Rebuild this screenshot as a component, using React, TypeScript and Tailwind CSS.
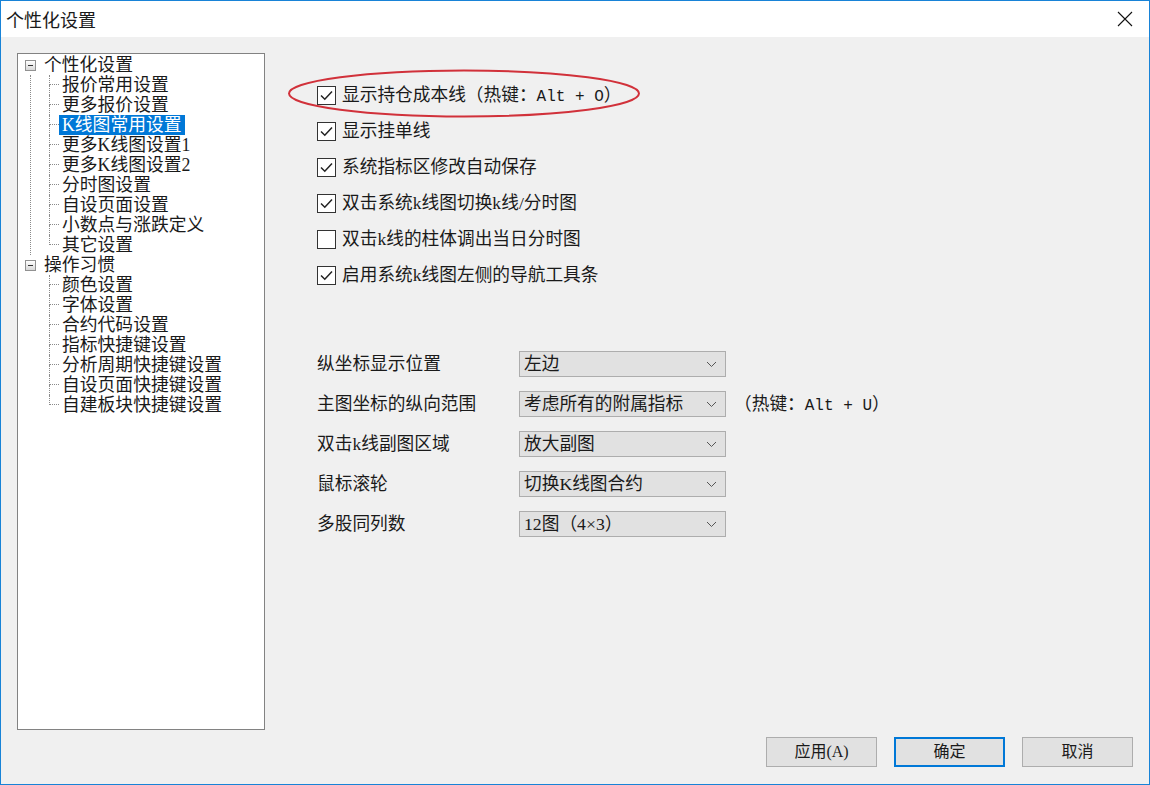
import React from 'react'

const FONT = '"Liberation Serif", "Noto Sans CJK SC", serif'
const MONO = '"Liberation Mono", "Noto Sans CJK SC", monospace'

const treeGroups = [
  {
    label: '个性化设置',
    items: [
      '报价常用设置',
      '更多报价设置',
      'K线图常用设置',
      '更多K线图设置1',
      '更多K线图设置2',
      '分时图设置',
      '自设页面设置',
      '小数点与涨跌定义',
      '其它设置',
    ],
  },
  {
    label: '操作习惯',
    items: [
      '颜色设置',
      '字体设置',
      '合约代码设置',
      '指标快捷键设置',
      '分析周期快捷键设置',
      '自设页面快捷键设置',
      '自建板块快捷键设置',
    ],
  },
]

const checkOptions = [
  { label: '显示持仓成本线', hotkey: 'Alt + O', checked: true },
  { label: '显示挂单线', checked: true },
  { label: '系统指标区修改自动保存', checked: true },
  { label: '双击系统k线图切换k线/分时图', checked: true },
  { label: '双击k线的柱体调出当日分时图', checked: false },
  { label: '启用系统k线图左侧的导航工具条', checked: true },
]

const selectRows = [
  { label: '纵坐标显示位置', value: '左边' },
  { label: '主图坐标的纵向范围', value: '考虑所有的附属指标', hotkey: 'Alt + U' },
  { label: '双击k线副图区域', value: '放大副图' },
  { label: '鼠标滚轮', value: '切换K线图合约' },
  { label: '多股同列数', value: '12图（4×3）' },
]

const MinusBox = () => (
  <div className="w-[11px] h-[11px] border border-[#919191] bg-gradient-to-b from-white to-[#d8d8d8] flex items-center justify-center">
    <div className="w-[5px] h-px bg-[#333]" />
  </div>
)

const Connector = ({ last }: { last: boolean }) => (
  <div className="w-[10px] h-5 flex flex-col shrink-0">
    <div className="h-[10px] border-l border-b border-dotted border-[#8a8a8a]" />
    {!last && <div className="h-[10px] border-l border-dotted border-[#8a8a8a]" />}
  </div>
)

const Tree = () => (
  <div className="w-[248px] h-[677px] bg-white border border-[#828282] pt-[1px] text-[17.8px] leading-5 text-[#1a1a1a]">
    {treeGroups.map((group, gi) => (
      <div key={group.label}>
        <div className="flex items-center h-5 pl-[7px]">
          <MinusBox />
          <span className="ml-[8px]">{group.label}</span>
        </div>
        <div
          className={
            gi === 0
              ? 'ml-[12px] border-l border-dotted border-[#8a8a8a]'
              : 'ml-[13px]'
          }
        >
          {group.items.map((item, i) => (
            <div key={item} className="flex items-center h-5 pl-[18px]">
              <Connector last={i === group.items.length - 1} />
              <span
                className={
                  item === 'K线图常用设置'
                    ? 'px-[3px] h-5 bg-[#0078d7] text-white'
                    : 'px-[3px]'
                }
              >
                {item}
              </span>
            </div>
          ))}
        </div>
      </div>
    ))}
  </div>
)

const CheckBox = ({ checked }: { checked: boolean }) => (
  <div className="w-[19px] h-[19px] border border-[#333] bg-white shrink-0 flex items-center justify-center">
    {checked && (
      <svg width="15" height="15" viewBox="0 0 15 15">
        <path d="M2 7.5 L5.8 11.2 L13 3.5" fill="none" stroke="#222" strokeWidth="1.5" />
      </svg>
    )}
  </div>
)

const Hotkey = ({ keys }: { keys: string }) => (
  <span>
    （热键：<span className="text-[16px]" style={{ fontFamily: MONO }}>{keys}</span>）
  </span>
)

const Select = ({ value }: { value: string }) => (
  <div className="w-[207px] h-[26px] bg-[#e1e1e1] border border-[#adadad] flex items-center justify-between pl-[4px] pr-[8px]">
    <span>{value}</span>
    <svg width="11" height="7" viewBox="0 0 11 7">
      <path d="M1 1 L5.5 5.5 L10 1" fill="none" stroke="#555" strokeWidth="1" />
    </svg>
  </div>
)

const Button = ({ label, primary }: { label: string; primary?: boolean }) => (
  <button
    className={
      primary
        ? 'w-[111px] h-[30px] bg-[#e1e1e1] border-2 border-[#0078d7] text-[16px] text-[#1a1a1a]'
        : 'w-[111px] h-[30px] bg-[#e1e1e1] border border-[#adadad] text-[16px] text-[#1a1a1a]'
    }
  >
    {label}
  </button>
)

export default function App() {
  return (
    <div
      className="w-[1150px] h-[785px] border border-[#1883d7] bg-[#f0f0f0] flex flex-col text-[#1a1a1a] overflow-hidden"
      style={{ fontFamily: FONT }}
    >
      <div className="h-[36px] bg-white flex items-center justify-between pl-[5px] pr-[16px] shrink-0">
        <span className="text-[18px]" style={{ fontFamily: '"Noto Sans CJK SC", sans-serif' }}>
          个性化设置
        </span>
        <svg width="16" height="16" viewBox="0 0 16 16">
          <path d="M1 1 L15 15 M15 1 L1 15" stroke="#111" strokeWidth="1.1" />
        </svg>
      </div>

      <div className="flex pl-[16px] pt-[16px]">
        <Tree />
        <div className="relative flex-1 pl-[52px] pt-[24px] text-[17.7px]">
          <svg
            className="absolute left-[22px] top-[16px]"
            width="354"
            height="50"
            viewBox="0 0 354 50"
          >
            <ellipse cx="177" cy="24.5" rx="175" ry="23" fill="none" stroke="#d1313a" strokeWidth="2" />
          </svg>
          {checkOptions.map((opt) => (
            <div key={opt.label} className="flex items-center h-9">
              <CheckBox checked={opt.checked} />
              <span className="ml-[6px]">
                {opt.label}
                {opt.hotkey && <Hotkey keys={opt.hotkey} />}
              </span>
            </div>
          ))}
          <div className="mt-[51px]">
            {selectRows.map((row) => (
              <div key={row.label} className="flex items-center h-10">
                <span className="w-[202px]">{row.label}</span>
                <Select value={row.value} />
                {row.hotkey && (
                  <span className="ml-[8px]">
                    <Hotkey keys={row.hotkey} />
                  </span>
                )}
              </div>
            ))}
          </div>
        </div>
      </div>

      <div className="flex justify-end gap-[17px] pr-[16px] mt-[7px]">
        <Button label="应用(A)" />
        <Button label="确定" primary />
        <Button label="取消" />
      </div>
    </div>
  )
}
